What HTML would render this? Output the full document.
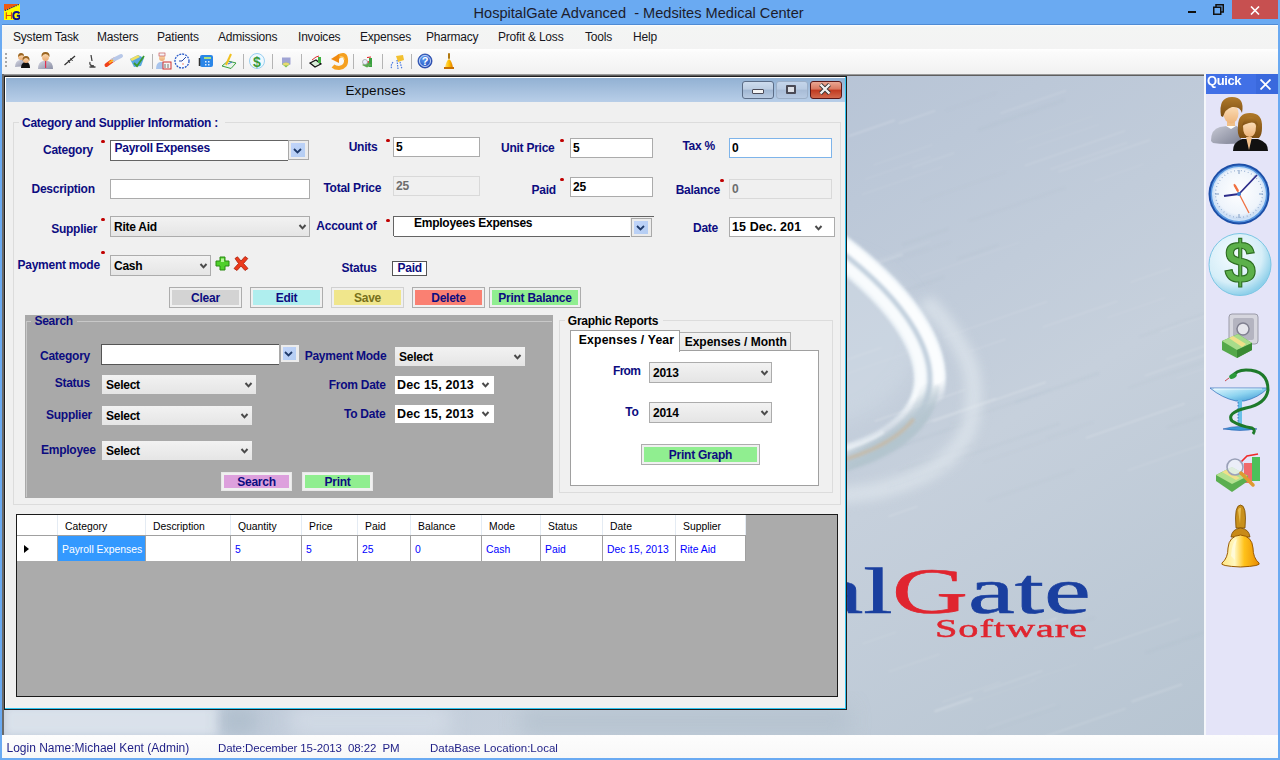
<!DOCTYPE html>
<html><head><meta charset="utf-8"><title>HospitalGate Advanced</title>
<style>
html,body{margin:0;padding:0;}
body{width:1280px;height:760px;overflow:hidden;position:relative;background:#6aaaf2;font-family:"Liberation Sans",sans-serif;}
.t{position:absolute;line-height:1;white-space:nowrap;}
.star{position:absolute;width:4px;height:3px;background:#c00000;border-radius:2px;}
.cmb{position:absolute;background:linear-gradient(#f2f2f2,#e5e5e5);}
svg{display:block}
</style></head><body>

<div style="position:absolute;left:4px;top:4px;width:16px;height:16px;background:#ffff00;overflow:hidden">
<svg width="16" height="16" viewBox="0 0 16 16"><path d="M0 0 H15 L0 6.8 Z" fill="#f05a10"/><path d="M1 6.6 L15 0.4" stroke="#10108a" stroke-width="1.1" stroke-dasharray="1.3 1"/>
<path d="M2.3 8.3 V15 M7.5 8.3 V15 M2.3 11.5 H7.5" stroke="#e04a10" stroke-width="1.1" fill="none"/>
<path d="M15.5 9.3 Q14.5 8 12.5 8 Q9.3 8 9.3 11.7 Q9.3 15.2 12.5 15.2 Q14.5 15.2 15.6 14 V11.8 H12.8" fill="none" stroke="#0c0c90" stroke-width="1.9"/></svg></div>
<div class="t" style="left:473.5px;top:6.04px;font-size:14.6px;font-weight:normal;color:#1c1c2c;font-family:'Liberation Sans',sans-serif;letter-spacing:0px;">HospitalGate Advanced&nbsp; - Medsites Medical Center</div>
<div style="position:absolute;left:1188px;top:11px;width:8px;height:2px;background:#111"></div>
<div style="position:absolute;left:1213px;top:4px"><svg width="11" height="11" viewBox="0 0 11 11"><rect x="0.75" y="3.25" width="7" height="7" fill="none" stroke="#111" stroke-width="1.5"/><path d="M3 3 V0.75 H10.25 V8 H8" fill="none" stroke="#111" stroke-width="1.5"/></svg></div>
<div style="position:absolute;left:1232px;top:0px;width:46px;height:19px;background:#c75050"></div>
<div style="position:absolute;left:1250px;top:6px"><svg width="10" height="9" viewBox="0 0 10 9"><path d="M1 0.5 L9 8.5 M9 0.5 L1 8.5" stroke="#fff" stroke-width="1.6"/></svg></div>
<div style="position:absolute;left:2px;top:23.5px;width:1276px;height:1.5px;background:#4f8bd4"></div>
<div style="position:absolute;left:2px;top:25px;width:1276px;height:24px;background:linear-gradient(#ffffff 0px,#f4f5f4 2px,#f3f3f3 100%)"></div>
<div style="position:absolute;left:2px;top:49px;width:1276px;height:25px;background:linear-gradient(#ffffff 0px,#fbfbfb 3px,#f1f1f1 100%)"></div>
<div class="t" style="left:13px;top:31.04px;font-size:12px;font-weight:normal;color:#161620;font-family:'Liberation Sans',sans-serif;letter-spacing:-0.2px;">System Task</div>
<div class="t" style="left:97px;top:31.04px;font-size:12px;font-weight:normal;color:#161620;font-family:'Liberation Sans',sans-serif;letter-spacing:-0.2px;">Masters</div>
<div class="t" style="left:157px;top:31.04px;font-size:12px;font-weight:normal;color:#161620;font-family:'Liberation Sans',sans-serif;letter-spacing:-0.2px;">Patients</div>
<div class="t" style="left:218px;top:31.04px;font-size:12px;font-weight:normal;color:#161620;font-family:'Liberation Sans',sans-serif;letter-spacing:-0.2px;">Admissions</div>
<div class="t" style="left:298px;top:31.04px;font-size:12px;font-weight:normal;color:#161620;font-family:'Liberation Sans',sans-serif;letter-spacing:-0.2px;">Invoices</div>
<div class="t" style="left:360px;top:31.04px;font-size:12px;font-weight:normal;color:#161620;font-family:'Liberation Sans',sans-serif;letter-spacing:-0.2px;">Expenses</div>
<div class="t" style="left:426px;top:31.04px;font-size:12px;font-weight:normal;color:#161620;font-family:'Liberation Sans',sans-serif;letter-spacing:-0.2px;">Pharmacy</div>
<div class="t" style="left:498px;top:31.04px;font-size:12px;font-weight:normal;color:#161620;font-family:'Liberation Sans',sans-serif;letter-spacing:-0.2px;">Profit &amp; Loss</div>
<div class="t" style="left:585px;top:31.04px;font-size:12px;font-weight:normal;color:#161620;font-family:'Liberation Sans',sans-serif;letter-spacing:-0.2px;">Tools</div>
<div class="t" style="left:633px;top:31.04px;font-size:12px;font-weight:normal;color:#161620;font-family:'Liberation Sans',sans-serif;letter-spacing:-0.2px;">Help</div>
<svg style="position:absolute;left:0;top:48px" width="470" height="26" viewBox="0 48 470 26">
<defs>
<linearGradient id="tshirt" x1="0" y1="0" x2="1" y2="1"><stop offset="0" stop-color="#d4d6e2"/><stop offset="1" stop-color="#8a8ea4"/></linearGradient>
<linearGradient id="tskin" x1="0" y1="0" x2="0" y2="1"><stop offset="0" stop-color="#fde0b8"/><stop offset="1" stop-color="#eaa870"/></linearGradient>
<linearGradient id="tbell" x1="0" y1="0" x2="1" y2="0"><stop offset="0" stop-color="#ffe070"/><stop offset="0.5" stop-color="#ffc000"/><stop offset="1" stop-color="#e07800"/></linearGradient>
<radialGradient id="thelp" cx="0.4" cy="0.35" r="0.7"><stop offset="0" stop-color="#5a9af0"/><stop offset="1" stop-color="#1a44b8"/></radialGradient>
</defs>
<!-- separators -->
<g fill="#b4b4b4"><rect x="152" y="54" width="1" height="15"/><rect x="243" y="54" width="1" height="15"/><rect x="272" y="54" width="1" height="15"/><rect x="301" y="54" width="1" height="15"/><rect x="353" y="54" width="1" height="15"/><rect x="382" y="54" width="1" height="15"/><rect x="411" y="54" width="1" height="15"/></g>
<!-- grip -->
<g fill="#a8a8a8"><rect x="5" y="53" width="2" height="2"/><rect x="5" y="57" width="2" height="2"/><rect x="5" y="61" width="2" height="2"/><rect x="5" y="65" width="2" height="2"/></g>
<!-- 1 people -->
<path d="M15 67 Q15 61 20 60 L24 60 Q27 61 27 66Z" fill="url(#tshirt)"/>
<circle cx="21" cy="57" r="3" fill="url(#tskin)"/><path d="M18 57 Q18 53 21 53 Q24 53 24 56 Q21 54 18 57Z" fill="#9a6420"/>
<path d="M21 68 Q21 63 25 62 L27 62 Q30 63 30 68Z" fill="#111"/>
<circle cx="26" cy="60" r="3" fill="url(#tskin)"/><path d="M22.5 61 Q22 56 26 56 Q30 56 29.5 61 Q28 58 26 58 Q24 58 22.5 61Z" fill="#9a6420"/>
<!-- 2 man -->
<path d="M38 69 Q38 62 43 61 L48 61 Q53 62 53 69Z" fill="url(#tshirt)"/>
<rect x="45" y="61" width="1.2" height="7" fill="#e03050"/>
<ellipse cx="45.5" cy="57" rx="3.5" ry="4" fill="url(#tskin)"/><path d="M41.5 57 Q41 52 45.5 52 Q50 52 49.5 57 Q48 54 45.5 54 Q43 54 41.5 57Z" fill="#9a6420"/>
<!-- 3 syringe -->
<path d="M64.5 65 L75 56" stroke="#333" stroke-width="1.3"/><path d="M68 60 L70 63 M70.5 58 L72.5 61" stroke="#333" stroke-width="1"/>
<!-- 4 microscope -->
<path d="M91 55 L92 61 M90 62 Q89 66 94 66 M89.5 67 H95.5" fill="none" stroke="#444" stroke-width="1.3"/>
<!-- 5 pill -->
<path d="M106.5 65 L114 59.5" stroke="#f0401a" stroke-width="4" stroke-linecap="round"/>
<path d="M113 60 L121 56" stroke="#b8c8e8" stroke-width="4" stroke-linecap="round"/>
<path d="M109 63 L113 60" stroke="#ffb020" stroke-width="2"/>
<!-- 6 colorful -->
<path d="M130 59 L138 55 L144 58 L141 66 L134 67 Z" fill="#5aa8e0"/><path d="M130 59 L138 55 L140 57 L132 61Z" fill="#f0e060"/>
<path d="M134 63 L137 66 L144 56" fill="none" stroke="#3a9a30" stroke-width="1.8"/>
<!-- 7 doctor -->
<path d="M156 69 Q156 63 160 62 L164 62 L164 69Z" fill="#a8c4ec"/>
<circle cx="162" cy="58" r="3" fill="url(#tskin)"/><rect x="159" y="53" width="6" height="3" fill="#f4f4f8" stroke="#c04040" stroke-width="0.6"/>
<rect x="163" y="62" width="8" height="7" fill="#f4f4f4" stroke="#d03030" stroke-width="1"/><path d="M165 64 V68 M168 64 V68" stroke="#555" stroke-width="0.8"/>
<!-- 8 clock -->
<circle cx="182" cy="61" r="7" fill="#f8fbff" stroke="#2a5ac8" stroke-width="1.3" stroke-dasharray="2 1"/>
<path d="M182 61 L186 57 M182 61 L179 61" stroke="#2a4aa8" stroke-width="1"/><circle cx="183" cy="64" r="0.7" fill="#f06030"/>
<!-- 9 phone -->
<rect x="200" y="55" width="13" height="12" rx="2" fill="#2a86e8"/><rect x="204" y="57" width="7" height="2" fill="#a8e080"/>
<g fill="#dcecff"><rect x="205" y="61" width="1.5" height="1.5"/><rect x="208" y="61" width="1.5" height="1.5"/><rect x="205" y="64" width="1.5" height="1.5"/><rect x="208" y="64" width="1.5" height="1.5"/></g>
<path d="M199.5 58 V66" stroke="#333" stroke-width="1.5"/>
<!-- 10 pencil/chart -->
<path d="M222 66 L228 61 L236 63 L231 68.5 Z" fill="#e8f4ea" stroke="#3aa040" stroke-width="1"/>
<path d="M226 65 L231 54" stroke="#f0c020" stroke-width="2"/><path d="M228 64 L232 62" stroke="#3a6ad0" stroke-width="1"/>
<!-- 11 dollar bubble -->
<circle cx="257" cy="61" r="7.5" fill="#eef8ff" stroke="#9ad0f0" stroke-width="1"/>
<text x="257" y="66.5" text-anchor="middle" font-family="Liberation Sans" font-weight="bold" font-size="14" fill="#3a9a3a">$</text>
<!-- 12 small safe -->
<rect x="282" y="57.5" width="8.5" height="7" fill="#a0a4d4"/><path d="M282 64 Q286 61 290 64 L286 67.5Z" fill="#7ac050"/><ellipse cx="286" cy="64" rx="3" ry="1.5" fill="#e8d870"/>
<!-- 13 money chart -->
<path d="M310 63 L316 60 L321 64 L315 67Z" fill="#d8ecd8" stroke="#111" stroke-width="1.2"/>
<rect x="318" y="57" width="3" height="6" fill="#40b040"/><path d="M312 60 L316 57 L319 56" fill="none" stroke="#e03030" stroke-width="1"/>
<!-- 14 orange arrow -->
<path d="M338 57 Q345 52 346 59 Q347 67 339 68 Q335 68 333 66" fill="none" stroke="#f5a020" stroke-width="4"/>
<path d="M331 59 L339 54 L339 63 Z" fill="#f08a10"/>
<path d="M340 57 Q344 56 344 60" fill="none" stroke="#ffd070" stroke-width="1.2"/>
<!-- 15 small chart -->
<rect x="369" y="58" width="3" height="9" fill="#3aa040"/><rect x="366" y="61" width="3" height="5" fill="#e05050"/>
<path d="M362 65 L367 62 L372 65 L367 67.5Z" fill="#5aaa50"/><circle cx="365" cy="62" r="2.5" fill="#eef" stroke="#999" stroke-width="0.7"/><path d="M367 57.5 L371 57" stroke="#e02020" stroke-width="1"/>
<!-- 16 people blue -->
<path d="M396 56 L403 55 L404 60 L398 62Z" fill="#f2c030"/>
<path d="M393 62 Q390 66 392 69 M397 60 L398 69 M400 62 L402 69" fill="none" stroke="#4a7ae0" stroke-width="1.2" stroke-dasharray="1.5 1"/>
<!-- 17 help -->
<circle cx="425" cy="61" r="7" fill="url(#thelp)" stroke="#1a3a9a" stroke-width="0.8"/><circle cx="425" cy="61" r="5.5" fill="none" stroke="#e8f0ff" stroke-width="0.8"/>
<text x="425" y="65.3" text-anchor="middle" font-family="Liberation Sans" font-weight="bold" font-size="11" fill="#fff">?</text>
<!-- 18 bell -->
<rect x="448" y="53" width="2" height="6" rx="1" fill="#b07810"/>
<path d="M445 68 Q446 61 449 59 Q452 61 453 68Z" fill="url(#tbell)"/><rect x="444" y="67" width="10" height="2" fill="#c87000"/>
</svg>

<div style="position:absolute;left:2px;top:73.5px;width:1202px;height:3.5px;background:linear-gradient(#b8b8b8,#3a3a3a 70%,#222)"></div>
<div style="position:absolute;left:2px;top:74px;width:2px;height:661px;background:#6a6a6a"></div>
<svg style="position:absolute;left:4px;top:76px" width="1200" height="659" viewBox="4 76 1200 659">
<defs>
<linearGradient id="bgg" gradientUnits="userSpaceOnUse" x1="812" y1="71" x2="1238" y2="749">
<stop offset="0" stop-color="#b7c4d6"/><stop offset="0.5" stop-color="#c6d0dc"/><stop offset="1" stop-color="#b6c4d1"/>
</linearGradient>
<filter id="bl1" x="-20%" y="-50%" width="140%" height="200%"><feGaussianBlur stdDeviation="0.8"/></filter>
<filter id="bl4" x="-50%" y="-50%" width="200%" height="200%"><feGaussianBlur stdDeviation="4"/></filter>
<filter id="bl2" x="-50%" y="-50%" width="200%" height="200%"><feGaussianBlur stdDeviation="1.5"/></filter>
<filter id="bl10" x="-50%" y="-50%" width="200%" height="200%"><feGaussianBlur stdDeviation="10"/></filter>
<filter id="bl6" x="-50%" y="-50%" width="200%" height="200%"><feGaussianBlur stdDeviation="6"/></filter>
<linearGradient id="mgrad" gradientUnits="userSpaceOnUse" x1="926" y1="390" x2="936" y2="406"><stop offset="0" stop-color="#fff"/><stop offset="1" stop-color="#000"/></linearGradient>
<linearGradient id="mgrad2" gradientUnits="userSpaceOnUse" x1="922" y1="384" x2="940" y2="412"><stop offset="0" stop-color="#000"/><stop offset="1" stop-color="#fff"/></linearGradient>
<mask id="bandmask" maskUnits="userSpaceOnUse" x="4" y="76" width="1200" height="659"><rect x="4" y="76" width="1200" height="659" fill="url(#mgrad2)"/></mask>
<mask id="arcmask" maskUnits="userSpaceOnUse" x="4" y="76" width="1200" height="659"><rect x="4" y="76" width="1200" height="659" fill="url(#mgrad)"/></mask>
</defs>
<rect x="4" y="76" width="1200" height="659" fill="url(#bgg)"/>
<g filter="url(#bl1)"><path d="M921.3 201.2 L1005.4 171.9" stroke="#a8b8c8" stroke-width="0.9" opacity="0.09"/><path d="M1030.5 680.3 L1077.4 664.1" stroke="#ffffff" stroke-width="0.9" opacity="0.09"/><path d="M832.2 378.9 L931.3 344.5" stroke="#ffffff" stroke-width="1.7" opacity="0.10"/><path d="M1014.8 143.2 L1093.3 115.9" stroke="#ffffff" stroke-width="0.9" opacity="0.09"/><path d="M1130.0 282.4 L1170.9 268.3" stroke="#ffffff" stroke-width="1.6" opacity="0.10"/><path d="M1050.0 169.4 L1127.4 142.5" stroke="#ffffff" stroke-width="1.6" opacity="0.11"/><path d="M848.9 136.2 L895.0 120.1" stroke="#ffffff" stroke-width="1.9" opacity="0.18"/><path d="M983.3 691.3 L1042.7 670.7" stroke="#ffffff" stroke-width="1.8" opacity="0.11"/><path d="M898.7 470.4 L972.1 444.9" stroke="#a8b8c8" stroke-width="1.4" opacity="0.20"/><path d="M1027.0 149.4 L1099.3 124.3" stroke="#ffffff" stroke-width="1.0" opacity="0.10"/><path d="M978.3 130.0 L1064.0 100.2" stroke="#a8b8c8" stroke-width="1.9" opacity="0.19"/><path d="M1107.2 317.8 L1165.6 297.5" stroke="#ffffff" stroke-width="0.9" opacity="0.15"/><path d="M838.7 278.1 L926.8 247.5" stroke="#a8b8c8" stroke-width="1.8" opacity="0.09"/><path d="M1027.1 742.7 L1125.9 708.4" stroke="#ffffff" stroke-width="2.0" opacity="0.12"/><path d="M942.0 702.2 L1000.9 681.8" stroke="#ffffff" stroke-width="0.9" opacity="0.17"/><path d="M1094.0 181.4 L1143.7 164.2" stroke="#ffffff" stroke-width="0.9" opacity="0.13"/><path d="M955.2 459.7 L1059.2 423.6" stroke="#a8b8c8" stroke-width="1.2" opacity="0.19"/><path d="M943.3 337.7 L1047.4 301.5" stroke="#ffffff" stroke-width="0.9" opacity="0.21"/><path d="M888.2 516.6 L917.7 506.3" stroke="#ffffff" stroke-width="1.2" opacity="0.20"/><path d="M821.4 368.6 L881.5 347.7" stroke="#ffffff" stroke-width="1.8" opacity="0.16"/><path d="M987.3 500.3 L1073.6 470.3" stroke="#a8b8c8" stroke-width="1.9" opacity="0.09"/><path d="M968.7 351.8 L1006.0 338.9" stroke="#ffffff" stroke-width="1.1" opacity="0.17"/><path d="M1175.7 378.6 L1213.6 365.4" stroke="#ffffff" stroke-width="0.8" opacity="0.16"/><path d="M873.1 165.3 L932.7 144.6" stroke="#ffffff" stroke-width="1.7" opacity="0.08"/><path d="M872.9 261.6 L931.1 241.3" stroke="#ffffff" stroke-width="1.0" opacity="0.13"/><path d="M986.0 727.9 L1055.6 703.7" stroke="#ffffff" stroke-width="0.9" opacity="0.12"/><path d="M920.2 276.7 L1019.6 242.2" stroke="#ffffff" stroke-width="1.1" opacity="0.10"/><path d="M1139.5 336.7 L1227.0 306.3" stroke="#a8b8c8" stroke-width="1.2" opacity="0.21"/><path d="M1024.6 165.8 L1125.4 130.7" stroke="#ffffff" stroke-width="1.3" opacity="0.15"/><path d="M892.2 449.0 L963.7 424.2" stroke="#a8b8c8" stroke-width="1.9" opacity="0.17"/><path d="M1146.0 652.6 L1243.4 618.8" stroke="#a8b8c8" stroke-width="1.9" opacity="0.19"/><path d="M874.5 421.2 L965.5 389.6" stroke="#ffffff" stroke-width="1.5" opacity="0.22"/><path d="M888.8 487.4 L946.7 467.2" stroke="#a8b8c8" stroke-width="2.2" opacity="0.19"/><path d="M1160.6 331.6 L1207.9 315.1" stroke="#ffffff" stroke-width="1.3" opacity="0.11"/><path d="M978.6 734.6 L1059.3 706.5" stroke="#a8b8c8" stroke-width="1.3" opacity="0.08"/><path d="M1055.7 630.9 L1094.5 617.4" stroke="#a8b8c8" stroke-width="1.9" opacity="0.13"/><path d="M969.3 220.9 L1065.3 187.6" stroke="#a8b8c8" stroke-width="1.4" opacity="0.13"/><path d="M945.3 711.7 L1035.7 680.2" stroke="#ffffff" stroke-width="0.8" opacity="0.10"/><path d="M1014.5 402.5 L1099.1 373.1" stroke="#a8b8c8" stroke-width="2.2" opacity="0.17"/><path d="M1042.3 327.4 L1117.7 301.2" stroke="#ffffff" stroke-width="1.9" opacity="0.10"/><path d="M1057.9 171.9 L1150.5 139.7" stroke="#ffffff" stroke-width="2.0" opacity="0.10"/><path d="M897.1 260.5 L950.6 241.9" stroke="#a8b8c8" stroke-width="1.3" opacity="0.11"/><path d="M1023.7 629.7 L1057.4 618.0" stroke="#ffffff" stroke-width="1.7" opacity="0.18"/><path d="M1085.7 438.0 L1184.9 403.5" stroke="#ffffff" stroke-width="1.5" opacity="0.20"/><path d="M1000.2 113.5 L1066.3 90.5" stroke="#ffffff" stroke-width="1.9" opacity="0.11"/><path d="M861.7 194.7 L943.1 166.5" stroke="#ffffff" stroke-width="1.3" opacity="0.10"/><path d="M983.6 462.1 L1079.2 428.9" stroke="#a8b8c8" stroke-width="0.9" opacity="0.09"/><path d="M898.5 123.4 L935.4 110.6" stroke="#ffffff" stroke-width="1.9" opacity="0.14"/><path d="M1128.9 387.7 L1209.8 359.6" stroke="#a8b8c8" stroke-width="1.1" opacity="0.15"/><path d="M898.3 432.2 L995.8 398.3" stroke="#ffffff" stroke-width="1.8" opacity="0.15"/><path d="M1131.4 701.8 L1182.1 684.2" stroke="#ffffff" stroke-width="2.0" opacity="0.16"/><path d="M864.8 179.4 L931.1 156.3" stroke="#ffffff" stroke-width="1.4" opacity="0.09"/><path d="M905.0 290.5 L943.9 277.0" stroke="#a8b8c8" stroke-width="1.7" opacity="0.19"/><path d="M958.0 259.0 L998.3 245.0" stroke="#a8b8c8" stroke-width="2.1" opacity="0.15"/><path d="M932.8 421.5 L1046.0 382.2" stroke="#ffffff" stroke-width="1.8" opacity="0.20"/><path d="M1165.7 359.6 L1230.2 337.2" stroke="#ffffff" stroke-width="1.8" opacity="0.13"/><path d="M823.7 456.1 L889.9 433.1" stroke="#ffffff" stroke-width="1.5" opacity="0.08"/><path d="M934.3 711.5 L972.5 698.3" stroke="#ffffff" stroke-width="2.2" opacity="0.21"/><path d="M870.7 265.5 L902.6 254.4" stroke="#ffffff" stroke-width="1.9" opacity="0.19"/><path d="M1093.8 648.7 L1180.1 618.7" stroke="#ffffff" stroke-width="1.0" opacity="0.21"/><path d="M1127.5 470.5 L1215.9 439.8" stroke="#ffffff" stroke-width="1.9" opacity="0.09"/><path d="M888.4 671.9 L939.9 654.0" stroke="#ffffff" stroke-width="1.9" opacity="0.08"/><path d="M862.2 643.9 L896.4 632.0" stroke="#ffffff" stroke-width="0.8" opacity="0.20"/><path d="M1144.6 375.9 L1251.4 338.8" stroke="#ffffff" stroke-width="1.5" opacity="0.17"/><path d="M912.3 167.4 L954.6 152.7" stroke="#ffffff" stroke-width="2.1" opacity="0.09"/><path d="M1047.0 437.9 L1093.1 421.9" stroke="#a8b8c8" stroke-width="1.0" opacity="0.14"/><path d="M946.5 110.3 L996.4 93.0" stroke="#a8b8c8" stroke-width="1.5" opacity="0.08"/><path d="M1167.6 427.7 L1217.1 410.5" stroke="#a8b8c8" stroke-width="1.9" opacity="0.14"/><path d="M951.3 424.1 L1051.2 389.5" stroke="#a8b8c8" stroke-width="1.2" opacity="0.14"/><path d="M902.6 244.8 L948.1 229.0" stroke="#a8b8c8" stroke-width="1.7" opacity="0.20"/></g>
<!-- inner lighter region -->
<ellipse cx="800" cy="340" rx="120" ry="90" fill="#d3dde7" opacity="0.5" filter="url(#bl10)"/>
<!-- glow right of the rim -->
<path d="M925.0 300.0 C929.2 305.0 942.2 317.5 950.0 330.0 C957.8 342.5 969.0 358.3 972.0 375.0 C975.0 391.7 974.2 414.5 968.0 430.0 C961.8 445.5 949.7 458.0 935.0 468.0 C920.3 478.0 900.0 485.0 880.0 490.0 C860.0 495.0 825.8 496.7 815.0 498.0" fill="none" stroke="#e2e9ef" stroke-width="16" opacity="0.65" filter="url(#bl6)"/>
<!-- band between arcs -->
<g mask="url(#arcmask)">
<g transform="rotate(16.19 500 273)">
<ellipse cx="500" cy="273" rx="445" ry="167" fill="none" stroke="#e9f0f5" stroke-width="32" filter="url(#bl2)"/>
<ellipse cx="500" cy="273" rx="454" ry="176" fill="none" stroke="#fbfdfe" stroke-width="11" filter="url(#bl2)"/>
<ellipse cx="500" cy="273" rx="436" ry="158" fill="none" stroke="#f8fbfd" stroke-width="10" filter="url(#bl2)"/>
<ellipse cx="500" cy="273" rx="445" ry="167" fill="none" stroke="#bfcddb" stroke-width="4" filter="url(#bl2)"/>
</g>
</g>
<!-- lower merged band -->
<g mask="url(#bandmask)"><path d="M929.7 383.9 L929.2 388.4 L928.4 392.8 L927.3 397.2 L925.9 401.5 L924.2 405.6 L922.2 409.7 L919.8 413.7 L917.2 417.6 L914.2 421.3 L911.0 425.0 L907.5 428.5 L903.6 432.0 L899.5 435.3 L895.1 438.5 L890.4 441.6 L885.4 444.6 L880.2 447.4 L874.6 450.1 L868.8 452.7 L862.7 455.2 L856.4 457.5 L849.8 459.7 L843.0 461.8 L835.9 463.7 L828.5 465.5 L821.0 467.1 L813.1 468.6 L805.1 470.0 L796.9 471.2" fill="none" stroke="#b3c4ce" stroke-width="20" opacity="0.95" filter="url(#bl2)"/></g>
<path d="M913.8 418.8 L910.4 422.8 L906.8 426.6 L902.8 430.2 L898.4 433.8 L893.7 437.2 L888.7 440.5 L883.4 443.6 L877.7 446.6 L871.7 449.5 L865.4 452.2 L858.8 454.8 L851.9 457.2 L844.7 459.4 L837.3 461.5 L829.5 463.4 L821.5 465.2 L813.1 466.8 L804.6 468.3 L795.8 469.6" fill="none" stroke="#cbb69a" stroke-width="3.5" opacity="0.7" filter="url(#bl2)"/>
<path d="M883.6 431.8 L878.8 434.7 L873.7 437.6 L868.2 440.2 L862.5 442.8 L856.4 445.2 L850.1 447.5 L843.5 449.6 L836.6 451.6 L829.4 453.4 L822.0 455.1 L814.3 456.7 L806.3 458.1 L798.1 459.3 L789.6 460.4" fill="none" stroke="#eef4f8" stroke-width="3" opacity="0.7" filter="url(#bl2)"/>
<!-- bottom strip streaks -->
<rect x="4" y="706" width="215" height="30" fill="#dde4ed" opacity="0.9" filter="url(#bl4)"/>
<rect x="222" y="708" width="34" height="26" fill="#a9bac8" opacity="0.8" filter="url(#bl10)"/>
<rect x="290" y="706" width="160" height="30" fill="#d8e0ea" opacity="0.7" filter="url(#bl10)"/>
<rect x="520" y="706" width="330" height="30" fill="#b3c1ce" opacity="0.75" filter="url(#bl10)"/>
<!-- logo -->
<g font-family="Liberation Serif" stroke-width="0.6">
<text x="0" y="0" transform="translate(892.5 613) scale(1.62 1)" font-size="65" fill="#1a3f9f" stroke="#1a3f9f" text-anchor="end">Hospital</text>
<text x="0" y="0" transform="translate(892 613) scale(1.62 1)" font-size="65" fill="#e0252f" stroke="#e0252f">G<tspan fill="#1a3f9f" stroke="#1a3f9f">ate</tspan></text>
<text x="0" y="0" transform="translate(935 636.5) scale(1.55 1)" font-size="26" fill="#e0252f" stroke="#e0252f" stroke-width="0.5" letter-spacing="0.6">Software</text>
</g>
</svg>

<div style="position:absolute;left:1204px;top:74px;width:2px;height:661px;background:#f4f6fa"></div>
<div style="position:absolute;left:1206px;top:74px;width:72px;height:662px;background:#e4e4f8"></div>
<div style="position:absolute;left:1206px;top:74px;width:72px;height:20px;background:#4170e6"></div>
<div style="position:absolute;left:1256px;top:74px;width:22px;height:20px;background:#3a69dd"></div>
<div class="t" style="left:1207px;top:73.8px;font-size:13px;font-weight:bold;color:#fff;letter-spacing:-0.4px">Quick</div>
<div style="position:absolute;left:1260px;top:79px"><svg width="11" height="11" viewBox="0 0 11 11"><path d="M0.5 0.5 L10.5 10.5 M10.5 0.5 L0.5 10.5" stroke="#fff" stroke-width="1.8"/></svg></div>
<svg style="position:absolute;left:1206px;top:94px" width="72" height="480" viewBox="1206 94 72 480">
<defs>
<linearGradient id="qshirt" x1="0" y1="0" x2="1" y2="1"><stop offset="0" stop-color="#c9cbd6"/><stop offset="1" stop-color="#7d8194"/></linearGradient>
<linearGradient id="qskin" x1="0" y1="0" x2="0" y2="1"><stop offset="0" stop-color="#fde3c0"/><stop offset="1" stop-color="#eeb47a"/></linearGradient>
<linearGradient id="qhair" x1="0" y1="0" x2="0" y2="1"><stop offset="0" stop-color="#b07a2a"/><stop offset="1" stop-color="#7a4c12"/></linearGradient>
<radialGradient id="qface" cx="0.5" cy="0.45" r="0.55"><stop offset="0" stop-color="#ffffff"/><stop offset="0.8" stop-color="#eef4fb"/><stop offset="1" stop-color="#c6daf2"/></radialGradient>
<radialGradient id="qbub" cx="0.4" cy="0.35" r="0.65"><stop offset="0" stop-color="#f4fbff"/><stop offset="0.7" stop-color="#d6eef8"/><stop offset="1" stop-color="#8fd0ea"/></radialGradient>
<linearGradient id="qbell" x1="0" y1="0" x2="1" y2="0"><stop offset="0" stop-color="#ffe680"/><stop offset="0.35" stop-color="#fff7c0"/><stop offset="0.6" stop-color="#ffc21a"/><stop offset="1" stop-color="#e88a00"/></linearGradient>
<linearGradient id="qbowl" x1="0" y1="0" x2="1" y2="1"><stop offset="0" stop-color="#e6f8ff"/><stop offset="0.5" stop-color="#8fd4f0"/><stop offset="1" stop-color="#2f8fd0"/></linearGradient>
</defs>
<!-- people -->
<path d="M1211 141 Q1211 129 1220 127 L1234 125 Q1241 127 1241 133 L1241 143 Q1226 145 1213 143Z" fill="url(#qshirt)"/>
<path d="M1226 126 L1231 129 L1236 126 L1233 124 L1229 124Z" fill="#fff"/>
<rect x="1227" y="119" width="8" height="7" fill="#f0c08a"/>
<ellipse cx="1231" cy="113.5" rx="7.5" ry="10" fill="url(#qskin)"/>
<path d="M1221 116 Q1218 97 1232 97 Q1245 97 1242 113 Q1240 106 1232 107 Q1225 109 1223 117Z" fill="url(#qhair)"/>
<path d="M1238 126 Q1238 113 1250 113 Q1263 113 1262 128 Q1262 135 1259 138 L1240 138 Q1237 134 1238 126Z" fill="url(#qhair)"/>
<path d="M1233 151 Q1233 142 1242 139 L1258 139 Q1268 142 1268 151Z" fill="#111"/>
<path d="M1246 137 L1249 150 L1252 137Z" fill="#f2c08a"/>
<path d="M1243 126 Q1243 137 1249.5 137 Q1256 137 1256 126 Q1255 120 1249.5 120 Q1244 120 1243 126Z" fill="url(#qskin)"/>
<path d="M1242 126 Q1244 116 1252 117 Q1257 118 1258 126 Q1254 121 1249 123 Q1245 124 1242 126Z" fill="url(#qhair)"/>
<!-- clock -->
<circle cx="1239" cy="194" r="30.5" fill="#1c4fa8"/>
<circle cx="1239" cy="194" r="28.5" fill="#5a98e0"/>
<circle cx="1239" cy="194" r="27" fill="#cfe3f8"/>
<circle cx="1239" cy="194" r="25.5" fill="url(#qface)"/>
<circle cx="1239" cy="194" r="23.5" fill="none" stroke="#8aa6cc" stroke-width="1.2" stroke-dasharray="0.8 2.7"/>
<g stroke="#7e9cc4" stroke-width="1"><path d="M1239 170 V174 M1239 214 V218 M1215 194 H1219 M1259 194 H1263"/></g>
<path d="M1239 194 L1257 175" stroke="#2c2c8a" stroke-width="1.8"/>
<path d="M1239 194 L1224 196" stroke="#2c2c8a" stroke-width="2"/>
<path d="M1234 184 L1249 213" stroke="#f07040" stroke-width="1.3"/><path d="M1234.5 185 L1238 191" stroke="#f07040" stroke-width="2.4"/>
<circle cx="1239" cy="194" r="2" fill="#3a7ad0"/>
<!-- dollar bubble -->
<circle cx="1240" cy="264.5" r="31" fill="url(#qbub)" stroke="#7cc6e4" stroke-width="1"/>
<text x="0" y="0" transform="translate(1240 283) scale(0.95 1)" text-anchor="middle" font-family="Liberation Sans" font-weight="bold" font-size="60" fill="#5cb04a" stroke="#2d6e22" stroke-width="1.2">$</text>
<!-- safe + money -->
<rect x="1229" y="314" width="29" height="30" rx="3" fill="#d6d6de" stroke="#9a9aa8" stroke-width="1"/>
<rect x="1233" y="318" width="21" height="22" rx="2" fill="#b4b4c0"/>
<circle cx="1243" cy="329" r="6" fill="#e6e6ec" stroke="#808090" stroke-width="1.5"/>
<path d="M1222 341 L1238 334 L1252 343 L1252 350 L1237 358 L1222 350Z" fill="#54a84a"/>
<path d="M1222 341 L1238 334 L1252 343 L1237 350Z" fill="#a8dc8a"/>
<path d="M1229 338 L1233 336 L1246 344 L1242 347Z" fill="#f0e08a"/>
<path d="M1237 350 L1252 343 L1252 350 L1237 358Z" fill="#3a8a34"/>
<!-- snake bowl -->
<path d="M1210 388 L1268 388 Q1258 398 1244 401 L1236 401 Q1222 398 1210 388Z" fill="url(#qbowl)" stroke="#2a6ab8" stroke-width="0.7"/>
<path d="M1214 389 L1262 389" stroke="#ffffff" stroke-width="1" opacity="0.7"/>
<rect x="1238" y="400" width="4" height="26" fill="#6ac0e8"/>
<path d="M1238 402 V426" stroke="#2a5ab0" stroke-width="0.8" stroke-dasharray="1.5 1.5"/>
<path d="M1223 429 Q1240 424 1257 429 Q1240 432 1223 429Z" fill="#3a9ad6" stroke="#2a5ab0" stroke-width="0.6"/>
<path d="M1246 370 Q1268 370 1268 390 Q1266 404 1246 408 Q1226 413 1232 421 Q1240 426 1252 428 Q1256 430 1253 434" fill="none" stroke="#1e7a2a" stroke-width="3"/>
<path d="M1246 370 Q1236 370 1232 377" fill="none" stroke="#1e7a2a" stroke-width="3.2"/>
<ellipse cx="1233" cy="376" rx="4" ry="2.5" fill="#2a9a3a" transform="rotate(-25 1233 376)"/>
<path d="M1229 378 L1225 381" stroke="#c02020" stroke-width="0.8"/>
<!-- chart + magnifier -->
<rect x="1252" y="457" width="8" height="24" fill="#4cc05a"/>
<rect x="1244" y="463" width="8" height="20" fill="#f06a6a"/>
<path d="M1240 463 L1247 456 L1258 454" fill="none" stroke="#f02a2a" stroke-width="1.6"/>
<path d="M1216 475 L1232 467 L1248 476 L1248 481 L1232 492 L1216 481Z" fill="#5aae50"/>
<path d="M1216 475 L1232 467 L1248 476 L1232 484Z" fill="#b2e08e"/>
<path d="M1222 472 L1226 470 L1240 478 L1236 480Z" fill="#f0e08a"/>
<circle cx="1235" cy="467" r="8" fill="#eef2f8" fill-opacity="0.75" stroke="#9aa0b8" stroke-width="1.6"/>
<path d="M1241 473 L1253 485" stroke="#e09a30" stroke-width="3.5" stroke-linecap="round"/>
<!-- bell -->
<path d="M1236 528 Q1234 505 1240.5 505 Q1247 505 1245 528Z" fill="#c8901c" stroke="#7a4a00" stroke-width="0.8"/>
<path d="M1238 510 Q1239 507 1241 508 L1240 524Z" fill="#f0c860" opacity="0.8"/>
<path d="M1231 537 Q1232 529 1240.5 528 Q1249 529 1250 537Z" fill="#c88a18" stroke="#7a4a00" stroke-width="0.8"/>
<path d="M1222 563 Q1228 558 1228 548 Q1229 536 1240.5 535 Q1252 536 1253 548 Q1253 558 1259 563 Q1262 566 1240.5 567 Q1219 566 1222 563Z" fill="url(#qbell)" stroke="#9a5a00" stroke-width="1"/>
<path d="M1231 556 Q1232 541 1237 539 Q1234 548 1235 560Z" fill="#fffbe0" opacity="0.8"/>
</svg>

<div style="position:absolute;left:2px;top:735px;width:1276px;height:23px;background:linear-gradient(#fdfdfd,#f8f8f8)"></div>
<div class="t" style="left:6.5px;top:742.34px;font-size:12px;font-weight:normal;color:#1e1e86;font-family:'Liberation Sans',sans-serif;letter-spacing:0px;">Login Name:Michael Kent (Admin)</div>
<div class="t" style="left:218px;top:742.77px;font-size:11.5px;font-weight:normal;color:#1e1e86;font-family:'Liberation Sans',sans-serif;letter-spacing:-0.1px;">Date:December 15-2013&nbsp; 08:22&nbsp; PM</div>
<div class="t" style="left:430px;top:742.77px;font-size:11.5px;font-weight:normal;color:#1e1e86;font-family:'Liberation Sans',sans-serif;letter-spacing:0px;">DataBase Location:Local</div>
<div style="position:absolute;left:4px;top:76px;width:843px;height:634px;background:#1e1e1e"></div>
<div style="position:absolute;left:5px;top:77px;width:841px;height:632px;background:#2ec4f0"></div>
<div style="position:absolute;left:5px;top:77px;width:840px;height:631px;background:#fff"></div>
<div style="position:absolute;left:6px;top:78px;width:839px;height:630px;background:#f0f0f0"></div>
<div style="position:absolute;left:6px;top:78px;width:839px;height:24px;background:linear-gradient(#92b1d3,#b8cee8)"></div>
<div class="t" style="left:345.5px;top:84.37px;font-size:13.5px;font-weight:normal;color:#0a0a0a;font-family:'Liberation Sans',sans-serif;letter-spacing:0px;letter-spacing:0.1px">Expenses</div>
<div style="position:absolute;left:742px;top:81px;width:30px;height:16px;border:1px solid #5b6d87;border-radius:3px;background:linear-gradient(#cddcee 0%,#bccde2 45%,#9fb6d2 50%,#b9cbe2 100%)"></div>
<div style="position:absolute;left:752px;top:89px;width:10px;height:3px;background:#f4f4f4;border:1px solid #4b4b58;border-radius:1px"></div>
<div style="position:absolute;left:776px;top:81px;width:30px;height:16px;border:1px solid #9db0c8;border-radius:3px;background:linear-gradient(#c4d5ea 0%,#b9cbe2 45%,#a8bcd6 50%,#b7cae2 100%)"></div>
<div style="position:absolute;left:786px;top:85px;width:6px;height:5px;background:#dde0e6;border:2px solid #4a4a55;border-radius:1px"></div>
<div style="position:absolute;left:810px;top:81px;width:30px;height:16px;border:1px solid #5a1818;border-radius:3px;background:linear-gradient(#e9a793 0%,#d9775f 45%,#c0391f 50%,#d2684c 100%)"></div>
<div style="position:absolute;left:818px;top:83px"><svg width="14" height="12" viewBox="0 0 14 12"><path d="M2.5 1.5 L11.5 10.5 M11.5 1.5 L2.5 10.5" stroke="#333" stroke-width="4"/><path d="M2.5 1.5 L11.5 10.5 M11.5 1.5 L2.5 10.5" stroke="#f2f2f2" stroke-width="2.4"/></svg></div>
<div style="position:absolute;left:13px;top:122px;width:826px;height:381px;border:1px solid #dcdcdc"></div>
<div style="position:absolute;left:19px;top:116px;width:206px;height:12px;background:#f0f0f0"></div>
<div class="t" style="left:22px;top:116.74px;font-size:12px;font-weight:bold;color:#0c0c80;font-family:'Liberation Sans',sans-serif;letter-spacing:-0.25px;">Category and Supplier Information :</div>
<div class="t" style="left:43px;top:143.74px;font-size:12px;font-weight:bold;color:#0c0c80;font-family:'Liberation Sans',sans-serif;letter-spacing:-0.25px;">Category</div>
<div class="star" style="left:101px;top:140px"></div>
<div style="position:absolute;left:110px;top:140px;width:177px;height:19px;border:1px solid #646464;border-right:none;background:#fff"></div>
<div class="t" style="left:114.5px;top:141.84px;font-size:12px;font-weight:bold;color:#0c0c80;font-family:'Liberation Sans',sans-serif;letter-spacing:-0.25px;">Payroll Expenses</div>
<div style="position:absolute;left:288px;top:140px;width:19px;height:18px;border:1px solid #a9a9a9;background:#ececec"></div>
<div style="position:absolute;left:291px;top:142.5px;width:14px;height:14px;background:linear-gradient(135deg,#c0d4fa,#b4cdf2)"></div>
<div style="position:absolute;left:292.7px;top:147.7px;width:9px;height:6px"><svg width="9" height="6" viewBox="0 0 9 6"><path d="M1 1 L4.5 4.5 L8 1" fill="none" stroke="#1f3a6a" stroke-width="1.8"/></svg></div>
<div class="t" style="left:348.7px;top:140.64px;font-size:12px;font-weight:bold;color:#0c0c80;font-family:'Liberation Sans',sans-serif;letter-spacing:-0.25px;">Units</div>
<div class="star" style="left:386px;top:139px"></div>
<div style="position:absolute;left:393px;top:137px;width:85px;height:18px;border:1px solid #ababab;background:#fff"></div>
<div class="t" style="left:396px;top:141.34px;font-size:12px;font-weight:bold;color:#000;font-family:'Liberation Sans',sans-serif;letter-spacing:-0.25px;">5</div>
<div class="t" style="left:501px;top:141.64px;font-size:12px;font-weight:bold;color:#0c0c80;font-family:'Liberation Sans',sans-serif;letter-spacing:-0.25px;">Unit Price</div>
<div class="star" style="left:560px;top:139px"></div>
<div style="position:absolute;left:570px;top:138px;width:81px;height:18px;border:1px solid #ababab;background:#fff"></div>
<div class="t" style="left:573px;top:142.34px;font-size:12px;font-weight:bold;color:#000;font-family:'Liberation Sans',sans-serif;letter-spacing:-0.25px;">5</div>
<div class="t" style="left:682.4px;top:139.84px;font-size:12px;font-weight:bold;color:#0c0c80;font-family:'Liberation Sans',sans-serif;letter-spacing:-0.25px;">Tax %</div>
<div style="position:absolute;left:729px;top:138px;width:101px;height:18px;border:1px solid #7eb4ea;background:#fff"></div>
<div class="t" style="left:732px;top:142.34px;font-size:12px;font-weight:bold;color:#000;font-family:'Liberation Sans',sans-serif;letter-spacing:-0.25px;">0</div>
<div class="t" style="left:31.5px;top:182.84px;font-size:12px;font-weight:bold;color:#0c0c80;font-family:'Liberation Sans',sans-serif;letter-spacing:-0.25px;">Description</div>
<div style="position:absolute;left:110px;top:179px;width:198px;height:18px;border:1px solid #ababab;background:#fff"></div>
<div class="t" style="left:323.4px;top:182.44px;font-size:12px;font-weight:bold;color:#0c0c80;font-family:'Liberation Sans',sans-serif;letter-spacing:-0.25px;">Total Price</div>
<div style="position:absolute;left:393px;top:176px;width:85px;height:18px;border:1px solid #d9d9d9;background:#f0f0f0"></div>
<div class="t" style="left:396px;top:180.34px;font-size:12px;font-weight:bold;color:#6d6d6d;font-family:'Liberation Sans',sans-serif;letter-spacing:-0.25px;">25</div>
<div class="t" style="left:531.5px;top:183.84px;font-size:12px;font-weight:bold;color:#0c0c80;font-family:'Liberation Sans',sans-serif;letter-spacing:-0.25px;">Paid</div>
<div class="star" style="left:560px;top:178px"></div>
<div style="position:absolute;left:570px;top:177px;width:81px;height:18px;border:1px solid #ababab;background:#fff"></div>
<div class="t" style="left:573px;top:181.34px;font-size:12px;font-weight:bold;color:#000;font-family:'Liberation Sans',sans-serif;letter-spacing:-0.25px;">25</div>
<div class="t" style="left:675.7px;top:183.54px;font-size:12px;font-weight:bold;color:#0c0c80;font-family:'Liberation Sans',sans-serif;letter-spacing:-0.25px;">Balance</div>
<div class="star" style="left:720px;top:179px"></div>
<div style="position:absolute;left:729px;top:179px;width:101px;height:18px;border:1px solid #d9d9d9;background:#f0f0f0"></div>
<div class="t" style="left:732px;top:183.34px;font-size:12px;font-weight:bold;color:#6d6d6d;font-family:'Liberation Sans',sans-serif;letter-spacing:-0.25px;">0</div>
<div class="t" style="left:51.2px;top:222.84px;font-size:12px;font-weight:bold;color:#0c0c80;font-family:'Liberation Sans',sans-serif;letter-spacing:-0.25px;">Supplier</div>
<div class="star" style="left:101px;top:218px"></div>
<div class="cmb" style="left:110px;top:216px;width:198px;height:19px;border:1px solid #acacac;"></div>
<div class="t" style="left:114px;top:220.84px;font-size:12px;font-weight:bold;color:#000;font-family:'Liberation Sans',sans-serif;letter-spacing:-0.25px;">Rite Aid</div>
<div style="position:absolute;left:298px;top:224.0px;width:9px;height:6px"><svg width="9" height="6" viewBox="0 0 9 6"><path d="M1.5 1 L4.5 4.3 L7.5 1" fill="none" stroke="#4a4a4a" stroke-width="2"/></svg></div>
<div class="t" style="left:316.3px;top:219.54px;font-size:12px;font-weight:bold;color:#0c0c80;font-family:'Liberation Sans',sans-serif;letter-spacing:-0.25px;">Account of</div>
<div class="star" style="left:386px;top:219px"></div>
<div style="position:absolute;left:393px;top:216px;width:260px;height:19px;border-top:1px solid #646464;border-left:1px solid #646464"></div>
<div style="position:absolute;left:394px;top:217px;width:236px;height:19px;border-bottom:1px solid #646464;background:#fff"></div>
<div class="t" style="left:414px;top:217.34px;font-size:12px;font-weight:bold;color:#000;font-family:'Liberation Sans',sans-serif;letter-spacing:-0.25px;">Employees Expenses</div>
<div style="position:absolute;left:631px;top:218px;width:19px;height:17px;border:1px solid #a9a9a9;background:#ececec"></div>
<div style="position:absolute;left:634px;top:220.5px;width:14px;height:13px;background:linear-gradient(135deg,#c0d4fa,#b4cdf2)"></div>
<div style="position:absolute;left:635.7px;top:225.2px;width:9px;height:6px"><svg width="9" height="6" viewBox="0 0 9 6"><path d="M1 1 L4.5 4.5 L8 1" fill="none" stroke="#1f3a6a" stroke-width="1.8"/></svg></div>
<div class="t" style="left:693px;top:221.74px;font-size:12px;font-weight:bold;color:#0c0c80;font-family:'Liberation Sans',sans-serif;letter-spacing:-0.25px;">Date</div>
<div style="position:absolute;left:729px;top:217px;width:104px;height:18px;border:1px solid #ababab;background:#fff"></div>
<div class="t" style="left:732px;top:221.42px;font-size:12.5px;font-weight:bold;color:#000;font-family:'Liberation Sans',sans-serif;letter-spacing:0.1px;">15 Dec. 201</div>
<div style="position:absolute;left:814px;top:225px;width:9px;height:6px"><svg width="9" height="6" viewBox="0 0 9 6"><path d="M1.5 1 L4.5 4.3 L7.5 1" fill="none" stroke="#4a4a4a" stroke-width="2"/></svg></div>
<div class="t" style="left:17.5px;top:259.34px;font-size:12px;font-weight:bold;color:#0c0c80;font-family:'Liberation Sans',sans-serif;letter-spacing:-0.25px;">Payment mode</div>
<div class="star" style="left:101px;top:251px"></div>
<div class="cmb" style="left:110px;top:255px;width:99px;height:19px;border:1px solid #acacac;"></div>
<div class="t" style="left:114px;top:259.84px;font-size:12px;font-weight:bold;color:#000;font-family:'Liberation Sans',sans-serif;letter-spacing:-0.25px;">Cash</div>
<div style="position:absolute;left:199px;top:263.0px;width:9px;height:6px"><svg width="9" height="6" viewBox="0 0 9 6"><path d="M1.5 1 L4.5 4.3 L7.5 1" fill="none" stroke="#4a4a4a" stroke-width="2"/></svg></div>
<div style="position:absolute;left:215px;top:256px"><svg width="15" height="15" viewBox="0 0 15 15"><path d="M5 1 H10 V5 H14 V10 H10 V14 H5 V10 H1 V5 H5 Z" fill="#4fd02a" stroke="#2a8a12" stroke-width="1"/><path d="M6 2.5 H9 V6 H6Z" fill="#b6f59a"/></svg></div>
<div style="position:absolute;left:233px;top:256px"><svg width="16" height="15" viewBox="0 0 16 15"><path d="M2 2.5 L4.5 0.8 L8 5 L12 0.5 L14.8 2.5 L10.5 7.5 L15 12.5 L12 14.5 L8 10 L4 14.5 L1 12.5 L5.5 7.5 Z" fill="#ec3a1c" stroke="#a8200a" stroke-width="0.8"/></svg></div>
<div class="t" style="left:341.6px;top:261.74px;font-size:12px;font-weight:bold;color:#0c0c80;font-family:'Liberation Sans',sans-serif;letter-spacing:-0.25px;">Status</div>
<div style="position:absolute;left:392px;top:261px;width:33px;height:13px;border:1px solid #555;background:#fff"></div>
<div class="t" style="left:397.5px;top:262.34px;font-size:12px;font-weight:bold;color:#0c0c80;font-family:'Liberation Sans',sans-serif;letter-spacing:-0.25px;">Paid</div>
<div style="position:absolute;left:169px;top:287px;width:71px;height:19px;border:1px solid #adadad;background:#f0f0f0"></div>
<div style="position:absolute;left:172px;top:290px;width:67px;height:15px;background:#d3d3d3"></div>
<div class="t" style="left:169px;width:73px;text-align:center;top:292.34px;font-size:12px;font-weight:bold;letter-spacing:-0.25px;color:#0c0c80">Clear</div>
<div style="position:absolute;left:250px;top:287px;width:71px;height:19px;border:1px solid #adadad;background:#f0f0f0"></div>
<div style="position:absolute;left:253px;top:290px;width:67px;height:15px;background:#afeeee"></div>
<div class="t" style="left:250px;width:73px;text-align:center;top:292.34px;font-size:12px;font-weight:bold;letter-spacing:-0.25px;color:#0c0c80">Edit</div>
<div style="position:absolute;left:331px;top:287px;width:71px;height:19px;border:1px solid #d0d0d0;background:#f0f0f0"></div>
<div style="position:absolute;left:334px;top:290px;width:67px;height:15px;background:#f0e68c"></div>
<div class="t" style="left:331px;width:73px;text-align:center;top:292.34px;font-size:12px;font-weight:bold;letter-spacing:-0.25px;color:#77701a">Save</div>
<div style="position:absolute;left:412px;top:287px;width:71px;height:19px;border:1px solid #adadad;background:#f0f0f0"></div>
<div style="position:absolute;left:415px;top:290px;width:67px;height:15px;background:#fa8072"></div>
<div class="t" style="left:412px;width:73px;text-align:center;top:292.34px;font-size:12px;font-weight:bold;letter-spacing:-0.25px;color:#0c0c80">Delete</div>
<div style="position:absolute;left:489px;top:287px;width:90px;height:19px;border:1px solid #adadad;background:#f0f0f0"></div>
<div style="position:absolute;left:492px;top:290px;width:86px;height:15px;background:#90ee90"></div>
<div class="t" style="left:489px;width:92px;text-align:center;top:292.34px;font-size:12px;font-weight:bold;letter-spacing:-0.25px;color:#0c0c80">Print Balance</div>
<div style="position:absolute;left:25px;top:315px;width:528px;height:183px;background:#a9a9a9"></div>
<div style="position:absolute;left:26px;top:321px;width:525px;height:175px;border:1px solid #c8c8c8;border-bottom:none;border-right:none"></div>
<div style="position:absolute;left:31px;top:316px;width:46px;height:10px;background:#a9a9a9"></div>
<div class="t" style="left:34.4px;top:315.44px;font-size:12px;font-weight:bold;color:#0c0c80;font-family:'Liberation Sans',sans-serif;letter-spacing:-0.25px;">Search</div>
<div class="t" style="left:40px;top:349.84px;font-size:12px;font-weight:bold;color:#0c0c80;font-family:'Liberation Sans',sans-serif;letter-spacing:-0.25px;">Category</div>
<div style="position:absolute;left:101px;top:344px;width:177px;height:19px;border:1px solid #555;border-right:none;background:#fff"></div>
<div style="position:absolute;left:280px;top:344px;width:18px;height:17px;border:1px solid #a9a9a9;background:#ececec"></div>
<div style="position:absolute;left:283px;top:346.5px;width:13px;height:13px;background:linear-gradient(135deg,#c0d4fa,#b4cdf2)"></div>
<div style="position:absolute;left:284.2px;top:351.2px;width:9px;height:6px"><svg width="9" height="6" viewBox="0 0 9 6"><path d="M1 1 L4.5 4.5 L8 1" fill="none" stroke="#1f3a6a" stroke-width="1.8"/></svg></div>
<div class="t" style="left:54.7px;top:377.34px;font-size:12px;font-weight:bold;color:#0c0c80;font-family:'Liberation Sans',sans-serif;letter-spacing:-0.25px;">Status</div>
<div class="cmb" style="left:102px;top:375px;width:154px;height:19px;"></div>
<div class="t" style="left:106px;top:378.84px;font-size:12px;font-weight:bold;color:#000;font-family:'Liberation Sans',sans-serif;letter-spacing:-0.25px;">Select</div>
<div style="position:absolute;left:244px;top:382.0px;width:9px;height:6px"><svg width="9" height="6" viewBox="0 0 9 6"><path d="M1.5 1 L4.5 4.3 L7.5 1" fill="none" stroke="#4a4a4a" stroke-width="2"/></svg></div>
<div class="t" style="left:46px;top:409.34px;font-size:12px;font-weight:bold;color:#0c0c80;font-family:'Liberation Sans',sans-serif;letter-spacing:-0.25px;">Supplier</div>
<div class="cmb" style="left:102px;top:406px;width:150px;height:19px;"></div>
<div class="t" style="left:106px;top:409.84px;font-size:12px;font-weight:bold;color:#000;font-family:'Liberation Sans',sans-serif;letter-spacing:-0.25px;">Select</div>
<div style="position:absolute;left:240px;top:413.0px;width:9px;height:6px"><svg width="9" height="6" viewBox="0 0 9 6"><path d="M1.5 1 L4.5 4.3 L7.5 1" fill="none" stroke="#4a4a4a" stroke-width="2"/></svg></div>
<div class="t" style="left:41px;top:443.84px;font-size:12px;font-weight:bold;color:#0c0c80;font-family:'Liberation Sans',sans-serif;letter-spacing:-0.25px;">Employee</div>
<div class="cmb" style="left:102px;top:441px;width:150px;height:19px;"></div>
<div class="t" style="left:106px;top:444.84px;font-size:12px;font-weight:bold;color:#000;font-family:'Liberation Sans',sans-serif;letter-spacing:-0.25px;">Select</div>
<div style="position:absolute;left:240px;top:448.0px;width:9px;height:6px"><svg width="9" height="6" viewBox="0 0 9 6"><path d="M1.5 1 L4.5 4.3 L7.5 1" fill="none" stroke="#4a4a4a" stroke-width="2"/></svg></div>
<div class="t" style="left:304.7px;top:349.59px;font-size:12px;font-weight:bold;color:#0c0c80;font-family:'Liberation Sans',sans-serif;letter-spacing:-0.25px;">Payment Mode</div>
<div class="cmb" style="left:395px;top:347px;width:130px;height:19px;"></div>
<div class="t" style="left:399px;top:350.84px;font-size:12px;font-weight:bold;color:#000;font-family:'Liberation Sans',sans-serif;letter-spacing:-0.25px;">Select</div>
<div style="position:absolute;left:513px;top:354.0px;width:9px;height:6px"><svg width="9" height="6" viewBox="0 0 9 6"><path d="M1.5 1 L4.5 4.3 L7.5 1" fill="none" stroke="#4a4a4a" stroke-width="2"/></svg></div>
<div class="t" style="left:328.7px;top:379.24px;font-size:12px;font-weight:bold;color:#0c0c80;font-family:'Liberation Sans',sans-serif;letter-spacing:-0.25px;">From Date</div>
<div style="position:absolute;left:395px;top:376px;width:99px;height:18px;background:#fff"></div>
<div class="t" style="left:397px;top:379.42px;font-size:12.5px;font-weight:bold;color:#000;font-family:'Liberation Sans',sans-serif;letter-spacing:0.15px;">Dec 15, 2013</div>
<div style="position:absolute;left:481px;top:382px;width:9px;height:6px"><svg width="9" height="6" viewBox="0 0 9 6"><path d="M1.5 1 L4.5 4.3 L7.5 1" fill="none" stroke="#4a4a4a" stroke-width="2"/></svg></div>
<div class="t" style="left:344px;top:408.24px;font-size:12px;font-weight:bold;color:#0c0c80;font-family:'Liberation Sans',sans-serif;letter-spacing:-0.25px;">To Date</div>
<div style="position:absolute;left:395px;top:405px;width:99px;height:18px;background:#fff"></div>
<div class="t" style="left:397px;top:408.42px;font-size:12.5px;font-weight:bold;color:#000;font-family:'Liberation Sans',sans-serif;letter-spacing:0.15px;">Dec 15, 2013</div>
<div style="position:absolute;left:481px;top:411px;width:9px;height:6px"><svg width="9" height="6" viewBox="0 0 9 6"><path d="M1.5 1 L4.5 4.3 L7.5 1" fill="none" stroke="#4a4a4a" stroke-width="2"/></svg></div>
<div style="position:absolute;left:221px;top:472px;width:69px;height:17px;border:1px solid #e8e8e8;background:#f0f0f0"></div>
<div style="position:absolute;left:224px;top:475px;width:65px;height:13px;background:#dda0dd"></div>
<div class="t" style="left:221px;width:71px;text-align:center;top:476.34px;font-size:12px;font-weight:bold;letter-spacing:-0.25px;color:#0c0c80">Search</div>
<div style="position:absolute;left:302px;top:472px;width:69px;height:17px;border:1px solid #e8e8e8;background:#f0f0f0"></div>
<div style="position:absolute;left:305px;top:475px;width:65px;height:13px;background:#90ee90"></div>
<div class="t" style="left:302px;width:71px;text-align:center;top:476.34px;font-size:12px;font-weight:bold;letter-spacing:-0.25px;color:#0c0c80">Print</div>
<div style="position:absolute;left:559px;top:320px;width:272px;height:171px;border:1px solid #dcdcdc"></div>
<div style="position:absolute;left:565px;top:314px;width:98px;height:12px;background:#f0f0f0"></div>
<div class="t" style="left:567.8px;top:314.64px;font-size:12px;font-weight:bold;color:#000;font-family:'Liberation Sans',sans-serif;letter-spacing:-0.25px;">Graphic Reports</div>
<div style="position:absolute;left:570px;top:350px;width:247px;height:134px;border:1px solid #a0a0a0;background:#fff"></div>
<div style="position:absolute;left:679px;top:332px;width:110px;height:17px;border:1px solid #b0b0b0;border-bottom:none;background:linear-gradient(#f3f3f3,#e6e6e6)"></div>
<div style="position:absolute;left:570px;top:330px;width:108px;height:21px;border:1px solid #a0a0a0;border-bottom:none;background:#fff"></div>
<div class="t" style="left:578.7px;top:334.27px;font-size:12.2px;font-weight:bold;color:#000;font-family:'Liberation Sans',sans-serif;letter-spacing:0.2px;">Expenses / Year</div>
<div class="t" style="left:684.7px;top:336.34px;font-size:12px;font-weight:bold;color:#000;font-family:'Liberation Sans',sans-serif;letter-spacing:0px;">Expenses / Month</div>
<div class="t" style="left:613px;top:365.24px;font-size:12px;font-weight:bold;color:#0c0c80;font-family:'Liberation Sans',sans-serif;letter-spacing:-0.7px;">From</div>
<div class="cmb" style="left:649px;top:362px;width:121px;height:19px;border:1px solid #acacac;"></div>
<div class="t" style="left:653px;top:366.84px;font-size:12px;font-weight:bold;color:#000;font-family:'Liberation Sans',sans-serif;letter-spacing:-0.25px;">2013</div>
<div style="position:absolute;left:760px;top:370.0px;width:9px;height:6px"><svg width="9" height="6" viewBox="0 0 9 6"><path d="M1.5 1 L4.5 4.3 L7.5 1" fill="none" stroke="#4a4a4a" stroke-width="2"/></svg></div>
<div class="t" style="left:625.2px;top:405.84px;font-size:12px;font-weight:bold;color:#0c0c80;font-family:'Liberation Sans',sans-serif;letter-spacing:-0.25px;">To</div>
<div class="cmb" style="left:649px;top:402px;width:121px;height:19px;border:1px solid #acacac;"></div>
<div class="t" style="left:653px;top:406.84px;font-size:12px;font-weight:bold;color:#000;font-family:'Liberation Sans',sans-serif;letter-spacing:-0.25px;">2014</div>
<div style="position:absolute;left:760px;top:410.0px;width:9px;height:6px"><svg width="9" height="6" viewBox="0 0 9 6"><path d="M1.5 1 L4.5 4.3 L7.5 1" fill="none" stroke="#4a4a4a" stroke-width="2"/></svg></div>
<div style="position:absolute;left:641px;top:444px;width:117px;height:19px;border:1px solid #adadad;background:#f0f0f0"></div>
<div style="position:absolute;left:644px;top:447px;width:113px;height:15px;background:#90ee90"></div>
<div class="t" style="left:641px;width:119px;text-align:center;top:449.34px;font-size:12px;font-weight:bold;letter-spacing:-0.25px;color:#0c0c80">Print Graph</div>
<div style="position:absolute;left:16px;top:514px;width:822px;height:183px;background:#1a1a1a"></div>
<div style="position:absolute;left:17px;top:515px;width:820px;height:181px;background:#ababab"></div>
<div style="position:absolute;left:17px;top:515px;width:729px;height:20px;background:#fff"></div>
<div style="position:absolute;left:17px;top:535px;width:729px;height:1px;background:#a0a0a0"></div>
<div style="position:absolute;left:17px;top:536px;width:729px;height:25px;background:#fff"></div>
<div style="position:absolute;left:57px;top:515px;width:1px;height:20px;background:#e4ebf3"></div>
<div style="position:absolute;left:57px;top:536px;width:1px;height:25px;background:#a0a0a0"></div>
<div style="position:absolute;left:145px;top:515px;width:1px;height:20px;background:#e4ebf3"></div>
<div style="position:absolute;left:145px;top:536px;width:1px;height:25px;background:#a0a0a0"></div>
<div style="position:absolute;left:230px;top:515px;width:1px;height:20px;background:#e4ebf3"></div>
<div style="position:absolute;left:230px;top:536px;width:1px;height:25px;background:#a0a0a0"></div>
<div style="position:absolute;left:301px;top:515px;width:1px;height:20px;background:#e4ebf3"></div>
<div style="position:absolute;left:301px;top:536px;width:1px;height:25px;background:#a0a0a0"></div>
<div style="position:absolute;left:357px;top:515px;width:1px;height:20px;background:#e4ebf3"></div>
<div style="position:absolute;left:357px;top:536px;width:1px;height:25px;background:#a0a0a0"></div>
<div style="position:absolute;left:410px;top:515px;width:1px;height:20px;background:#e4ebf3"></div>
<div style="position:absolute;left:410px;top:536px;width:1px;height:25px;background:#a0a0a0"></div>
<div style="position:absolute;left:481px;top:515px;width:1px;height:20px;background:#e4ebf3"></div>
<div style="position:absolute;left:481px;top:536px;width:1px;height:25px;background:#a0a0a0"></div>
<div style="position:absolute;left:540px;top:515px;width:1px;height:20px;background:#e4ebf3"></div>
<div style="position:absolute;left:540px;top:536px;width:1px;height:25px;background:#a0a0a0"></div>
<div style="position:absolute;left:602px;top:515px;width:1px;height:20px;background:#e4ebf3"></div>
<div style="position:absolute;left:602px;top:536px;width:1px;height:25px;background:#a0a0a0"></div>
<div style="position:absolute;left:675px;top:515px;width:1px;height:20px;background:#e4ebf3"></div>
<div style="position:absolute;left:675px;top:536px;width:1px;height:25px;background:#a0a0a0"></div>
<div style="position:absolute;left:745px;top:536px;width:1px;height:25px;background:#a0a0a0"></div>
<div style="position:absolute;left:745px;top:515px;width:1px;height:20px;background:#e4ebf3"></div>
<div style="position:absolute;left:58px;top:536px;width:87px;height:25px;background:#3399ff"></div>
<div class="t" style="left:64.5px;top:520.65px;font-size:11.4px;font-weight:normal;color:#000;font-family:'Liberation Sans',sans-serif;letter-spacing:0px;transform:scaleX(0.91);transform-origin:0 0;">Category</div>
<div class="t" style="left:61.5px;top:543.65px;font-size:11.4px;font-weight:normal;color:#fff;font-family:'Liberation Sans',sans-serif;letter-spacing:0px;transform:scaleX(0.91);transform-origin:0 0;">Payroll Expenses</div>
<div class="t" style="left:152.5px;top:520.65px;font-size:11.4px;font-weight:normal;color:#000;font-family:'Liberation Sans',sans-serif;letter-spacing:0px;transform:scaleX(0.91);transform-origin:0 0;">Description</div>
<div class="t" style="left:237.5px;top:520.65px;font-size:11.4px;font-weight:normal;color:#000;font-family:'Liberation Sans',sans-serif;letter-spacing:0px;transform:scaleX(0.91);transform-origin:0 0;">Quantity</div>
<div class="t" style="left:234.5px;top:543.65px;font-size:11.4px;font-weight:normal;color:#0000ff;font-family:'Liberation Sans',sans-serif;letter-spacing:0px;transform:scaleX(0.91);transform-origin:0 0;">5</div>
<div class="t" style="left:308.5px;top:520.65px;font-size:11.4px;font-weight:normal;color:#000;font-family:'Liberation Sans',sans-serif;letter-spacing:0px;transform:scaleX(0.91);transform-origin:0 0;">Price</div>
<div class="t" style="left:305.5px;top:543.65px;font-size:11.4px;font-weight:normal;color:#0000ff;font-family:'Liberation Sans',sans-serif;letter-spacing:0px;transform:scaleX(0.91);transform-origin:0 0;">5</div>
<div class="t" style="left:364.5px;top:520.65px;font-size:11.4px;font-weight:normal;color:#000;font-family:'Liberation Sans',sans-serif;letter-spacing:0px;transform:scaleX(0.91);transform-origin:0 0;">Paid</div>
<div class="t" style="left:361.5px;top:543.65px;font-size:11.4px;font-weight:normal;color:#0000ff;font-family:'Liberation Sans',sans-serif;letter-spacing:0px;transform:scaleX(0.91);transform-origin:0 0;">25</div>
<div class="t" style="left:417.5px;top:520.65px;font-size:11.4px;font-weight:normal;color:#000;font-family:'Liberation Sans',sans-serif;letter-spacing:0px;transform:scaleX(0.91);transform-origin:0 0;">Balance</div>
<div class="t" style="left:414.5px;top:543.65px;font-size:11.4px;font-weight:normal;color:#0000ff;font-family:'Liberation Sans',sans-serif;letter-spacing:0px;transform:scaleX(0.91);transform-origin:0 0;">0</div>
<div class="t" style="left:488.5px;top:520.65px;font-size:11.4px;font-weight:normal;color:#000;font-family:'Liberation Sans',sans-serif;letter-spacing:0px;transform:scaleX(0.91);transform-origin:0 0;">Mode</div>
<div class="t" style="left:485.5px;top:543.65px;font-size:11.4px;font-weight:normal;color:#0000ff;font-family:'Liberation Sans',sans-serif;letter-spacing:0px;transform:scaleX(0.91);transform-origin:0 0;">Cash</div>
<div class="t" style="left:547.5px;top:520.65px;font-size:11.4px;font-weight:normal;color:#000;font-family:'Liberation Sans',sans-serif;letter-spacing:0px;transform:scaleX(0.91);transform-origin:0 0;">Status</div>
<div class="t" style="left:544.5px;top:543.65px;font-size:11.4px;font-weight:normal;color:#0000ff;font-family:'Liberation Sans',sans-serif;letter-spacing:0px;transform:scaleX(0.91);transform-origin:0 0;">Paid</div>
<div class="t" style="left:609.5px;top:520.65px;font-size:11.4px;font-weight:normal;color:#000;font-family:'Liberation Sans',sans-serif;letter-spacing:0px;transform:scaleX(0.91);transform-origin:0 0;">Date</div>
<div class="t" style="left:606.5px;top:543.65px;font-size:11.4px;font-weight:normal;color:#0000ff;font-family:'Liberation Sans',sans-serif;letter-spacing:0px;transform:scaleX(0.91);transform-origin:0 0;">Dec 15, 2013</div>
<div class="t" style="left:682.5px;top:520.65px;font-size:11.4px;font-weight:normal;color:#000;font-family:'Liberation Sans',sans-serif;letter-spacing:0px;transform:scaleX(0.91);transform-origin:0 0;">Supplier</div>
<div class="t" style="left:679.5px;top:543.65px;font-size:11.4px;font-weight:normal;color:#0000ff;font-family:'Liberation Sans',sans-serif;letter-spacing:0px;transform:scaleX(0.91);transform-origin:0 0;">Rite Aid</div>
<div style="position:absolute;left:24px;top:545px;width:0;height:0;border-top:4.5px solid transparent;border-bottom:4.5px solid transparent;border-left:5px solid #000"></div>
</body></html>
